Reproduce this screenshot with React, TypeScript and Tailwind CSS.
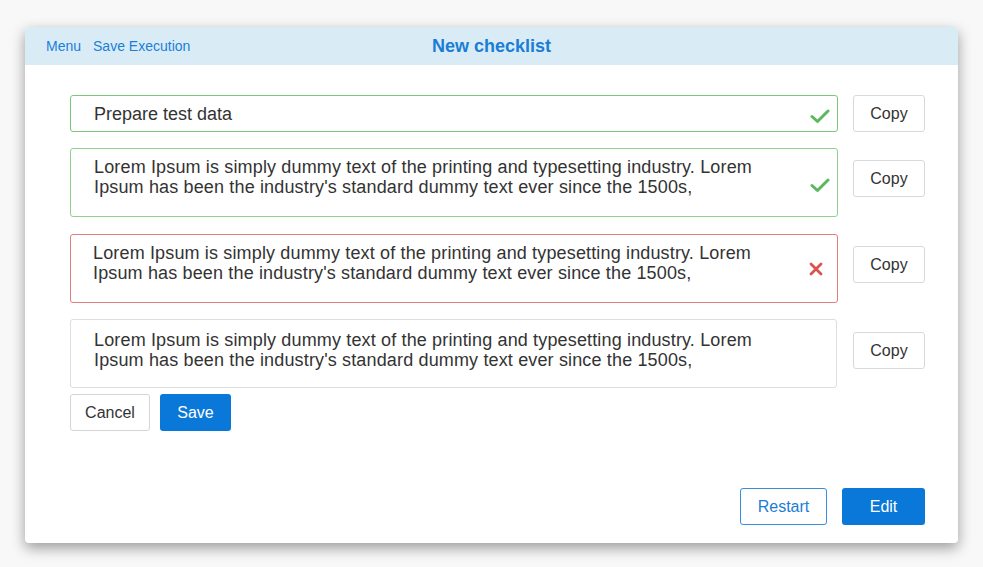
import React from "react";

const font = { fontFamily: '"Liberation Sans", Arial, sans-serif' };

function Lorem() {
  return (
    <>
      Lorem Ipsum is simply dummy text of the printing and typesetting industry. Lorem
      <br />
      Ipsum has been the industry's standard dummy text ever since the 1500s,
    </>
  );
}

function Check() {
  return (
    <svg width="20" height="16" viewBox="0 0 20 16" fill="none">
      <path d="M2 8.5 L7.5 13.5 L18 3" stroke="#5cb85c" strokeWidth="3" strokeLinecap="round" strokeLinejoin="round" />
    </svg>
  );
}

function Cross() {
  return (
    <svg width="14" height="14" viewBox="0 0 14 14" fill="none">
      <path d="M2 2 L12 12 M12 2 L2 12" stroke="#d9534f" strokeWidth="2.8" strokeLinecap="round" />
    </svg>
  );
}

function CopyBtn({ mt, last }: { mt?: boolean; last?: boolean }) {
  return (
    <button
      className={`${last ? "ml-[16px] mt-[13px]" : "ml-[15px]"} ${mt ? "mt-[12px]" : ""} w-[72px] h-[37px] rounded-[3px] border border-[#d9d9d9] bg-white text-[16px] text-[#333] shrink-0`}
    >
      Copy
    </button>
  );
}

export default function App() {
  return (
    <div className="w-[983px] h-[567px] bg-[#f8f8f8] pt-[27px] pl-[25px]" style={font}>
      <div className="w-[933px] h-[516px] bg-white rounded-[4px] shadow-[0_5px_14px_rgba(0,0,0,0.38)] flex flex-col overflow-hidden">
        <div className="relative h-[38px] bg-[#d9ecf6] flex items-center pl-[21px] gap-[12px] shrink-0">
          <span className="text-[14px] text-[#1a7fd9]">Menu</span>
          <span className="text-[14px] text-[#1a7fd9]">Save Execution</span>
          <div className="absolute inset-0 flex items-center justify-center pointer-events-none">
            <span className="text-[18px] font-bold text-[#1a7dd6]">New checklist</span>
          </div>
        </div>

        <div className="flex-1 flex flex-col pl-[45px] pr-[33px] pt-[30px] pb-[18px]">
          <div className="flex flex-col gap-[16px]">
            <div className="flex items-start">
              <div className="w-[768px] h-[37px] rounded-[3px] border border-[#7cc77c] flex items-center justify-between pl-[23px] pr-[7px]">
                <span className="text-[18px] text-[#333] leading-[20px]">Prepare test data</span>
                <div className="mt-[4px]"><Check /></div>
              </div>
              <CopyBtn />
            </div>

            <div className="flex items-start">
              <div className="w-[768px] h-[69px] rounded-[3px] border border-[#8fd08f] flex items-center justify-between pl-[23px] pr-[7px]">
                <p className="whitespace-nowrap tracking-[0.15px] text-[18px] text-[#333] leading-[20px] self-start pt-[8px]"><Lorem /></p>
                <div className="mt-[5px]"><Check /></div>
              </div>
              <CopyBtn mt />
            </div>

            <div className="flex items-start mt-[1px]">
              <div className="w-[768px] h-[69px] rounded-[3px] border border-[#e57d7d] flex items-center justify-between pl-[22px] pr-[14px]">
                <p className="whitespace-nowrap tracking-[0.15px] text-[18px] text-[#333] leading-[20px] self-start pt-[8px]"><Lorem /></p>
                <Cross />
              </div>
              <CopyBtn mt />
            </div>

            <div className="flex items-start">
              <div className="w-[767px] h-[69px] rounded-[3px] border border-[#dedede] flex items-center pl-[23px] pr-[8px]">
                <p className="whitespace-nowrap tracking-[0.15px] text-[18px] text-[#333] leading-[20px] self-start pt-[10px]"><Lorem /></p>
              </div>
              <CopyBtn last />
            </div>
          </div>

          <div className="flex gap-[10px] mt-[6px]">
            <button className="w-[80px] h-[37px] rounded-[3px] border border-[#d4d4d4] bg-white text-[16px] text-[#333]">
              Cancel
            </button>
            <button className="w-[71px] h-[37px] rounded-[3px] bg-[#0a78d8] text-[16px] text-white">
              Save
            </button>
          </div>

          <div className="flex-1" />

          <div className="flex justify-end gap-[15px]">
            <button className="w-[87px] h-[37px] rounded-[3px] border border-[#3a8fdc] bg-white text-[16px] text-[#1a7dd6]">
              Restart
            </button>
            <button className="w-[83px] h-[37px] rounded-[3px] bg-[#0a78d8] text-[16px] text-white">
              Edit
            </button>
          </div>
        </div>
      </div>
    </div>
  );
}
